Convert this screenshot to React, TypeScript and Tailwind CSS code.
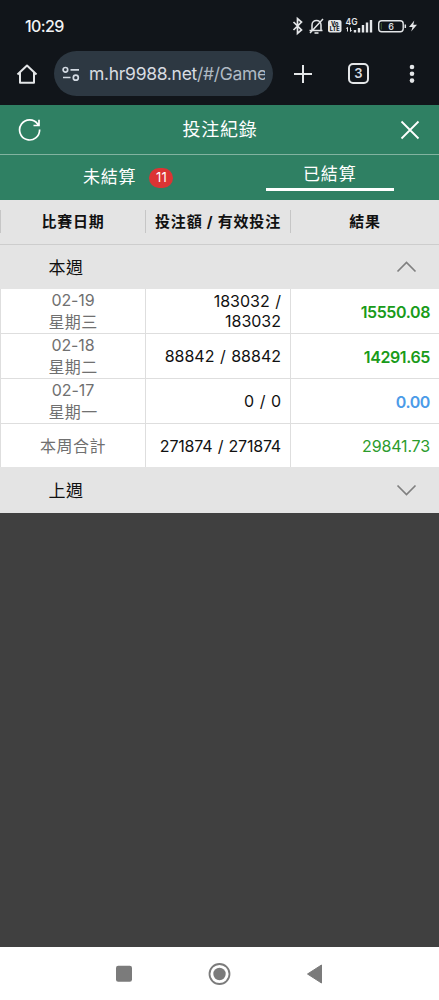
import type { ReactNode } from "react";

const ROWS = [
  { date: "02-19", day: "星期三", bets: ["183032 /", "183032"], result: "15550.08", color: "text-[#199b19]" },
  { date: "02-18", day: "星期二", bets: ["88842 / 88842"], result: "14291.65", color: "text-[#199b19]" },
  { date: "02-17", day: "星期一", bets: ["0 / 0"], result: "0.00", color: "text-[#4c9be8]" },
];

function StatusBar() {
  return (
    <div className="flex h-[52px] items-center justify-between pl-[25px] pr-[21px] text-[#f1f3f5]">
      <span className="text-[16px] font-medium tracking-[-0.6px]">10:29</span>
      <svg width="126" height="20" viewBox="0 0 126 20" fill="none" stroke="#e4e6e8">
        {/* bluetooth */}
        <path d="M1.5 6 9.5 14 5.5 17.5V2.5L9.5 6 1.5 14" strokeWidth="1.7" />
        {/* muted bell */}
        <path d="M20 14V9c0-6 9-6 9 0v5M17.5 14.5h13M18 17 31 3" strokeWidth="1.5" />
        <path d="M22.5 17h4" strokeWidth="1.6" />
        {/* volte */}
        <rect x="36" y="4" width="13.5" height="12.5" rx="2" fill="#e4e6e8" stroke="none" />
        <g fill="#15191e" stroke="none" fontWeight="800" textAnchor="middle">
          <text x="42.7" y="9.7" fontSize="5.5">Vo</text>
          <text x="42.7" y="15" fontSize="5.5">LTE</text>
        </g>
        {/* signal */}
        <text x="53.5" y="9" fontSize="8.5" fontWeight="600" fill="#e4e6e8" stroke="none">4G</text>
        <path d="M55.5 11.5v4M54.3 12.7l1.2-1.5M58.5 11.5v4l1.3-1.2" strokeWidth="1" />
        <path d="M63 16.5v-2.5M67 16.5v-4.5M71 16.5V9M75 16.5V6.5M79 16.5V4" strokeWidth="2.4" />
        {/* battery */}
        <rect x="86.7" y="4.7" width="24.5" height="11" rx="3" strokeWidth="1.4" />
        <path d="M89.3 7v6.5" stroke="#405c30" strokeWidth="1" />
        <path d="M113.3 8.5v3.5" strokeWidth="1.5" />
        <text x="99" y="13.5" fontSize="9" fontWeight="500" textAnchor="middle" fill="#e4e6e8" stroke="none">6</text>
        <path d="M122.3 4.5 117 11h3.5l-1.3 4.5 5.8-6.7h-3.7z" fill="#e4e6e8" stroke="none" />
      </svg>
    </div>
  );
}

function AddressBar() {
  return (
    <div className="flex h-[53px] items-start text-[#d8dce1]">
      <svg className="ml-4 mt-[11px] shrink-0" width="22" height="22" viewBox="0 0 22 22" fill="none" stroke="#e4e6e8" strokeWidth="2">
        <path d="M1.5 11.5 11 2.5l9.5 9M4 9.5v10.3h14V9.5" strokeLinejoin="round" />
      </svg>
      <div className="ml-4 mt-[-1px] flex h-[45px] w-[219px] shrink-0 items-center rounded-full bg-[#2d3842] pl-[8px]">
        <svg className="shrink-0" width="18" height="16" viewBox="0 0 18 16" fill="none" stroke="#d3dae2" strokeWidth="1.7">
          <circle cx="3.4" cy="3.8" r="2.3" />
          <path d="M8.5 3.8H17M1 11.5h7.5" />
          <circle cx="13.8" cy="11.7" r="2.5" />
        </svg>
        <div className="ml-[9px] mt-[2px] w-[176px] overflow-hidden whitespace-nowrap text-[17.5px] tracking-[-0.3px]">
          m.hr9988.net<span className="text-[#b0bac4]">/#/Game</span>
        </div>
      </div>
      <svg className="ml-[20px] mt-[12px] shrink-0" width="20" height="20" viewBox="0 0 20 20" stroke="#e4e6e8" strokeWidth="2">
        <path d="M10 1v18M1 10h18" />
      </svg>
      <div className="ml-[35px] mt-[11px] flex size-[21px] shrink-0 items-center justify-center rounded-[5px] border-2 border-[#e4e6e8] text-[13px] font-semibold leading-none">
        3
      </div>
      <svg className="ml-[31px] mt-[11px] shrink-0" width="24" height="22" viewBox="0 0 24 22" fill="#e4e6e8">
        <circle cx="12" cy="4" r="2.3" />
        <circle cx="12" cy="10.8" r="2.3" />
        <circle cx="12" cy="17.6" r="2.3" />
      </svg>
    </div>
  );
}

function Header() {
  return (
    <div className="bg-[#2f8063] text-white">
      <div className="flex h-[50px] items-center justify-between border-b border-[#82b3a0] px-[18px]">
        <svg width="24" height="24" viewBox="0 0 24 24" fill="none" stroke="currentColor" strokeWidth="1.7">
          <path d="M21.6 11.5A10 10 0 1 1 19.8 6.2L21 7.5M21 1.8v5.7h-5.5" />
        </svg>
        <h1 className="text-[18px] tracking-[0.8px]">投注紀錄</h1>
        <svg className="-mr-[1px]" width="24" height="24" viewBox="0 0 24 24" fill="none" stroke="currentColor" strokeWidth="1.8">
          <path d="m3.5 3.5 17 17M20.5 3.5l-17 17" />
        </svg>
      </div>
      <div className="flex h-[45px] text-[17px] tracking-[0.8px]">
        <div className="flex w-1/2 items-center pl-[83px]">
          <span>未結算</span>
          <span className="ml-[13px] flex h-5 w-6 items-center justify-center rounded-full bg-[#dc3434] text-[13px] tracking-normal">11</span>
        </div>
        <div className="flex w-1/2 flex-col items-center">
          <div className="ml-px mt-[3px] flex h-[33px] w-32 items-center justify-center border-b-[3px] border-white pt-[4px]">
            已結算
          </div>
        </div>
      </div>
    </div>
  );
}

function WeekBar({ label, open = false }: { label: string; open?: boolean }) {
  return (
    <div className="flex h-full items-center justify-between bg-[#e4e4e4] pl-[48.5px] pr-[22px] text-[17px] text-[#111]">
      <span className="mt-[3px] tracking-[0.4px]">{label}</span>
      <svg width="21" height="14" viewBox="0 0 21 14" fill="none" stroke="#808080" strokeWidth="1.7">
        <path d={open ? "M1.5 11.5 10.5 2.5l9 9" : "m1.5 2.5 9 9 9-9"} />
      </svg>
    </div>
  );
}

function Row({ date, bets, result }: { date: ReactNode; bets: ReactNode; result: ReactNode }) {
  return (
    <div className="grid h-full grid-cols-[146px_145px_1fr] bg-white text-center">
      <div className="flex flex-col justify-center border-x border-[#dedede] leading-[22px] text-[#707070]">{date}</div>
      <div className="flex flex-col justify-center border-r border-[#dedede] pr-[9px] text-right leading-[20px] text-[#111] [word-spacing:1px]">
        {bets}
      </div>
      <div className="flex items-center justify-end pr-[9px] pt-px">{result}</div>
    </div>
  );
}

export default function App() {
  return (
    <div className="flex h-[1000px] w-[439px] flex-col overflow-hidden bg-[#404040] font-['Inter','Noto_Sans_CJK_TC',sans-serif]">
      <div className="h-[105px] bg-[#11151a]">
        <StatusBar />
        <AddressBar />
      </div>
      <Header />

      {/* Column titles */}
      <div className="flex h-[45px] items-start border-b border-[#cdcdcd] bg-[#e4e4e4] pt-[10px] text-[15px] font-bold text-[#111]">
        <div className="flex h-[23px] w-[146px] items-center justify-center border-x border-[#c6c6c6] pt-[2px] tracking-[0.7px]">比賽日期</div>
        <div className="flex h-[23px] w-[145px] items-center justify-center whitespace-nowrap border-r border-[#c6c6c6] pt-[2px] tracking-[0.8px]">
          投注額 / 有效投注
        </div>
        <div className="flex h-[23px] flex-1 items-center justify-center pt-[2px] tracking-[0.7px]">結果</div>
      </div>

      <div className="h-[44px]">
        <WeekBar label="本週" open />
      </div>
      {ROWS.map((r) => (
        <div key={r.date} className="h-[45px] border-b border-[#dedede] text-[16px]">
          <Row
            date={
              <>
                <span className="tracking-[-0.1px]">{r.date}</span>
                <span className="tracking-[0.4px]">{r.day}</span>
              </>
            }
            bets={r.bets.map((b) => (
              <span key={b}>{b}</span>
            ))}
            result={<span className={`font-semibold tracking-[-0.4px] ${r.color}`}>{r.result}</span>}
          />
        </div>
      ))}
      <div className="h-[43px] text-[16px]">
        <Row
          date={<span className="tracking-[0.5px]">本周合計</span>}
          bets={<span className="tracking-[-0.2px]">271874 / 271874</span>}
          result={<span className="tracking-[-0.15px] text-[#2c9c2c]">29841.73</span>}
        />
      </div>
      <div className="h-[46px]">
        <WeekBar label="上週" />
      </div>

      {/* System navigation */}
      <div className="mt-auto flex h-[53px] items-center justify-center bg-white">
        <svg width="220" height="24" viewBox="0 0 220 24" fill="#7b7b7b">
          <rect x="6" y="3.7" width="16" height="16" rx="2.2" />
          <circle cx="109.5" cy="12" r="10" fill="none" stroke="#7b7b7b" strokeWidth="1.8" />
          <circle cx="109.5" cy="12" r="6.2" />
          <path d="M197.5 12 211.5 3v18z" stroke="#7b7b7b" strokeLinejoin="round" />
        </svg>
      </div>
    </div>
  );
}
